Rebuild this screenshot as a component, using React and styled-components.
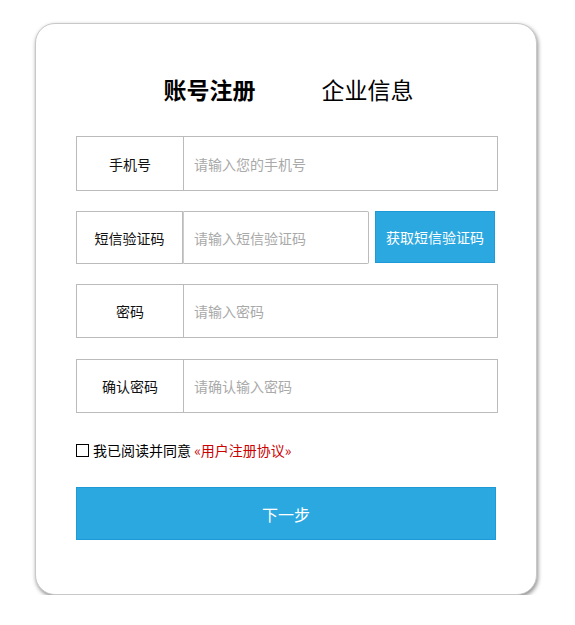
import React from 'react';
import styled, {createGlobalStyle} from 'styled-components';

const GlobalStyle = createGlobalStyle`
    body {
        margin: 0;
        background: #fff;
        font-family: "Microsoft YaHei", "Noto Sans CJK SC", sans-serif;
    }
`;

const fields = [
    {label: '手机号', placeholder: '请输入您的手机号', h: 55},
    {label: '短信验证码', placeholder: '请输入短信验证码', sms: true},
    {label: '密码', placeholder: '请输入密码', type: 'password', h: 54},
    {label: '确认密码', placeholder: '请确认输入密码', type: 'password', h: 54, gap: 21}
];

export default function App() {
    return (
        <>
            <GlobalStyle/>
            <Card>
                <Tabs>
                    <Tab active>账号注册</Tab>
                    <Tab>企业信息</Tab>
                </Tabs>
                <Form>
                    {fields.map((f) => (
                        f.sms ? (
                            <SmsRow key={f.label}>
                                <SmsLabel>{f.label}</SmsLabel>
                                <SmsInput placeholder={f.placeholder}/>
                                <SmsButton type="button">获取短信验证码</SmsButton>
                            </SmsRow>
                        ) : (
                            <Row key={f.label} h={f.h} gap={f.gap}>
                                <Label>{f.label}</Label>
                                <Input type={f.type || 'text'} placeholder={f.placeholder}/>
                            </Row>
                        )
                    ))}
                </Form>
                <Agree>
                    <Check type="checkbox"/>
                    我已阅读并同意 <Protocol>«用户注册协议»</Protocol>
                </Agree>
                <Submit type="button">下一步</Submit>
            </Card>
        </>
    );
}

const
    Card = styled.div`
        box-sizing: border-box;
        width: 502px;
        height: 572px;
        margin: 23px 0 0 35px;
        padding: 49px 39px 0 40px;
        border: 1px solid #c8c8c8;
        border-radius: 20px;
        background: #fff;
        box-shadow: 1px 2px 4px rgba(0, 0, 0, 0.45);
    `,
    Tabs = styled.div`
        display: flex;
        justify-content: center;
        gap: 66px;
        height: 32px;
        margin-left: 4px;
    `,
    Tab = styled.div`
        font-size: 23px;
        line-height: 32px;
        color: #000;
        font-weight: ${p => p.active ? 700 : 400};
    `,
    Form = styled.div`
        display: flex;
        flex-direction: column;
        margin-top: 31px;
    `,
    Row = styled.div`
        display: flex;
        box-sizing: border-box;
        width: 422px;
        height: ${p => p.h}px;
        margin-top: ${p => p.gap || 20}px;
        border: 1px solid #bbb;
        &:first-child {
            margin-top: 0;
        }
    `,
    Label = styled.div`
        flex: 0 0 106px;
        display: flex;
        align-items: center;
        justify-content: center;
        border-right: 1px solid #bbb;
        font-size: 14px;
        color: #111;
    `,
    Input = styled.input`
        flex: 1;
        min-width: 0;
        border: none;
        outline: none;
        padding: 0 0 0 10px;
        font-family: inherit;
        font-size: 14px;
        color: #333;
        background: transparent;
        &::placeholder {
            color: #a9a9a9;
        }
    `,
    SmsRow = styled.div`
        display: flex;
        height: 53px;
        margin-top: 20px;
    `,
    SmsLabel = styled(Label)`
        box-sizing: border-box;
        flex-basis: 107px;
        border: 1px solid #bbb;
    `,
    SmsInput = styled(Input)`
        box-sizing: border-box;
        flex: 0 0 186px;
        border: 1px solid #bbb;
        border-left-color: #ccc;
        border-radius: 0 2px 2px 0;
    `,
    SmsButton = styled.button`
        box-sizing: border-box;
        width: 120px;
        height: 52px;
        margin-left: 6px;
        border: 1px solid #1e9ad8;
        background: #2ca8e0;
        color: #fff;
        font-family: inherit;
        font-size: 14px;
        padding: 0;
        cursor: pointer;
    `,
    Agree = styled.label`
        display: flex;
        align-items: center;
        margin-top: 28px;
        height: 18px;
        font-size: 14px;
        color: #000;
        white-space: pre;
    `,
    Check = styled.input`
        appearance: none;
        box-sizing: border-box;
        width: 13px;
        height: 13px;
        margin: 0 4px 0 0;
        border: 1px solid #000;
        background: #fff;
    `,
    Protocol = styled.span`
        color: #c00;
    `,
    Submit = styled.button`
        display: block;
        box-sizing: border-box;
        width: 420px;
        height: 53px;
        margin-top: 28px;
        border: 1px solid #1e9ad8;
        background: #2ca8e0;
        color: #fff;
        font-family: inherit;
        font-size: 16px;
        padding: 0;
        cursor: pointer;
    `;
